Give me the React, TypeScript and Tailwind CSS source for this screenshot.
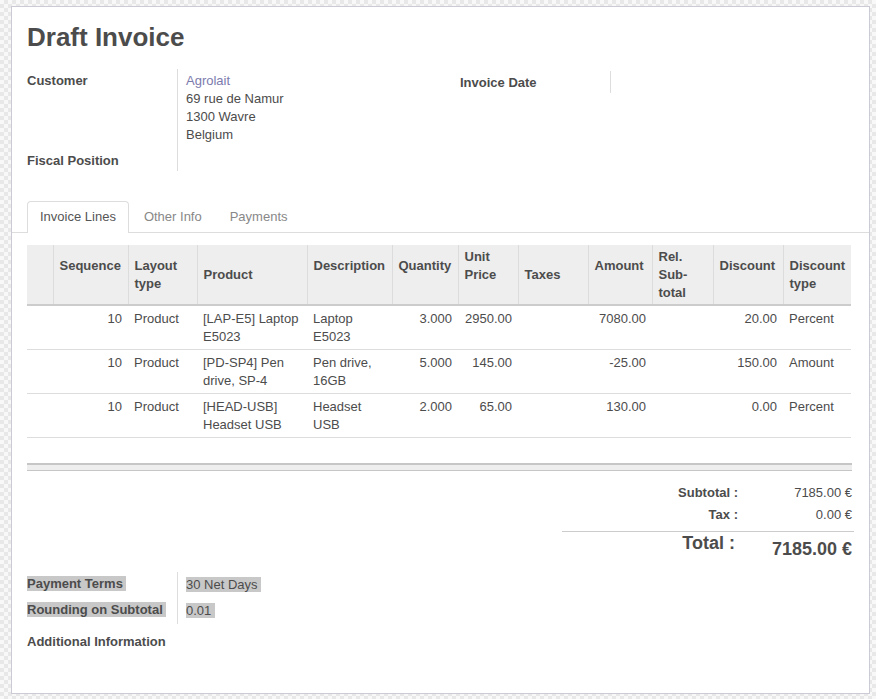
const cols = [26, 75, 69, 110, 85, 66, 60, 70, 64, 61, 70, 68];

// header lines; empty strings keep the odd vertical offsets of the original
const headers: string[][] = [
  [],
  ["Sequence", ""],
  ["Layout", "type"],
  ["Product"],
  ["Description", ""],
  ["Quantity", ""],
  ["Unit", "Price", ""],
  ["Taxes"],
  ["Amount", ""],
  ["Rel.", "Sub-", "total"],
  ["Discount", ""],
  ["Discount", "type"],
];

const lines = [
  {
    product: ["[LAP-E5] Laptop", "E5023"],
    desc: ["Laptop", "E5023"],
    qty: "3.000",
    price: "2950.00",
    amount: "7080.00",
    disc: "20.00",
    type: "Percent",
  },
  {
    product: ["[PD-SP4] Pen", "drive, SP-4"],
    desc: ["Pen drive,", "16GB"],
    qty: "5.000",
    price: "145.00",
    amount: "-25.00",
    disc: "150.00",
    type: "Amount",
  },
  {
    product: ["[HEAD-USB]", "Headset USB"],
    desc: ["Headset", "USB"],
    qty: "2.000",
    price: "65.00",
    amount: "130.00",
    disc: "0.00",
    type: "Percent",
  },
];

function Multi({ parts }: { parts: string[] }) {
  return (
    <>
      {parts.map((p, i) => (
        <span key={i} className="block">
          {p || "\u00a0"}
        </span>
      ))}
    </>
  );
}

function Sel({ children }: { children: string }) {
  return <span className="bg-[#c8c8c8]">{children}{"\u00a0"}</span>;
}

function App() {
  const td = "px-[6px] pt-[4px] pb-[3px] align-top";
  return (
    <div className="min-h-[699px] pt-[6px] pl-[11px] bg-[repeating-conic-gradient(#e8e8e8_0%_25%,#f8f8f8_0%_50%)] bg-[length:8px_8px] font-['Liberation_Sans',Arial,sans-serif] text-[13px] leading-[18px] text-[#4c4c4c]">
      <div className="w-[859px] h-[688px] bg-white border border-[#cbcbd6] pl-[15px] pr-[17px] pt-[15px]">
        <h1 className="text-[26px] leading-[30px] font-bold">Draft Invoice</h1>

        {/* header fields */}
        <div className="mt-[17px] grid grid-cols-[433px_1fr]">
          <div>
            <div className="flex">
              <div className="w-[151px] border-r border-[#dddddd] pt-[3px] pb-[3px] font-bold">Customer</div>
              <div className="pl-[8px] pt-[3px] pb-[3px]">
                <div className="text-[#7c7bad]">Agrolait</div>
                <div>69 rue de Namur</div>
                <div>1300 Wavre</div>
                <div>Belgium</div>
              </div>
            </div>
            <div className="flex">
              <div className="w-[151px] border-r border-[#dddddd] pt-[5px] pb-[1px] font-bold">Fiscal Position</div>
              <div className="pl-[8px]" />
            </div>
          </div>
          <div>
            <div className="flex mt-[2px]">
              <div className="w-[151px] border-r border-[#dddddd] pt-[3px] pb-[1px] font-bold">Invoice Date</div>
              <div className="pl-[8px]" />
            </div>
          </div>
        </div>

        {/* tabs */}
        <div className="mt-[30px] -ml-[15px] -mr-[17px] pl-[15px] flex items-start border-b border-[#dddddd]">
          <div className="-mb-px mr-[2px] px-[12px] pt-[6px] pb-[7px] bg-white border border-b-0 border-[#dddddd] rounded-t-[4px] text-[#555555]">
            Invoice Lines
          </div>
          <div className="mr-[2px] px-[12px] pt-[6px] pb-[6px] border border-b-0 border-transparent text-[#888888]">Other Info</div>
          <div className="mr-[2px] px-[12px] pt-[6px] pb-[6px] border border-b-0 border-transparent text-[#888888]">Payments</div>
        </div>

        {/* invoice lines */}
        <table className="mt-[12px] w-[824px] table-fixed border-collapse">
          <colgroup>
            {cols.map((w, i) => (
              <col key={i} style={{ width: w }} />
            ))}
          </colgroup>
          <thead>
            <tr className="bg-[#eeeeee] border-b-2 border-[#cccccc]">
              {headers.map((h, i) => (
                <th
                  key={i}
                  className={
                    "px-[6px] pt-[3px] pb-[2px] h-[59px] align-middle text-left font-bold " +
                    (i > 0 ? "border-l border-[#dcdcdc]" : "")
                  }
                >
                  <Multi parts={h} />
                </th>
              ))}
            </tr>
          </thead>
          <tbody>
            {lines.map((l, i) => (
              <tr key={i} className="border-b border-[#dddddd]">
                <td className={td} />
                <td className={td + " text-right"}>10</td>
                <td className={td}>Product</td>
                <td className={td}>
                  <Multi parts={l.product} />
                </td>
                <td className={td}>
                  <Multi parts={l.desc} />
                </td>
                <td className={td + " text-right"}>{l.qty}</td>
                <td className={td + " text-right"}>{l.price}</td>
                <td className={td} />
                <td className={td + " text-right"}>{l.amount}</td>
                <td className={td} />
                <td className={td + " text-right"}>{l.disc}</td>
                <td className={td}>{l.type}</td>
              </tr>
            ))}
          </tbody>
        </table>
        <div className="mt-[25px] h-[8px] bg-[#eeeeee] border-t-2 border-b border-[#c6c6c6]" />

        {/* totals */}
        <div className="ml-auto -mr-[2px] w-[292px] pt-[13px]">
          <div className="grid grid-cols-[176px_1fr] gap-y-[4px]">
            <div className="text-right font-bold">Subtotal :</div>
            <div className="text-right pr-[2px]">7185.00 €</div>
            <div className="text-right font-bold">Tax :</div>
            <div className="text-right pr-[2px]">0.00 €</div>
          </div>
          <div className="mt-[7px] grid grid-cols-[176px_1fr] border-t border-[#cccccc]">
            <div className="text-right font-bold text-[18px] leading-[22px] pr-[3px]">Total :</div>
            <div className="text-right font-bold text-[18px] leading-[22px] pr-[2px] pt-[6px]">7185.00 €</div>
          </div>
        </div>

        {/* payment terms */}
        <div className="mt-[12px]">
          <div className="flex h-[26px]">
            <div className="w-[151px] border-r border-[#dddddd] pt-[3px] font-bold">
              <Sel>Payment Terms</Sel>
            </div>
            <div className="pl-[8px] pt-[4px]">
              <Sel>30 Net Days</Sel>
            </div>
          </div>
          <div className="flex h-[26px]">
            <div className="w-[151px] border-r border-[#dddddd] pt-[3px] font-bold">
              <Sel>Rounding on Subtotal</Sel>
            </div>
            <div className="pl-[8px] pt-[4px]">
              <Sel>0.01</Sel>
            </div>
          </div>
        </div>
        <div className="mt-[9px] font-bold">Additional Information</div>
      </div>
    </div>
  );
}

export default App;
